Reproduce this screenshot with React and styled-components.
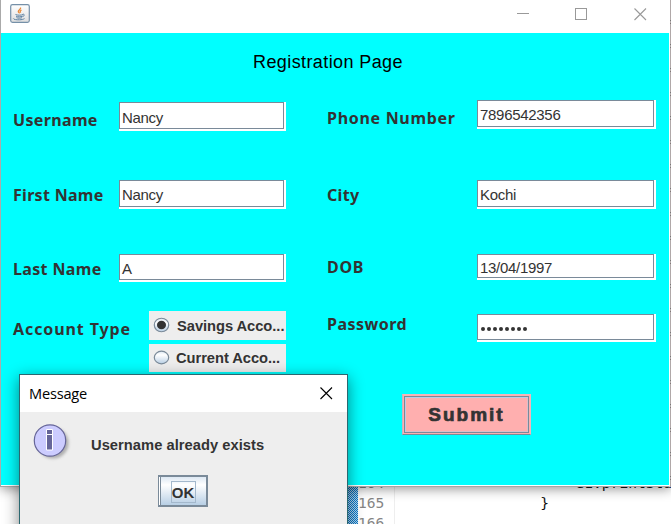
import React from "react";
import styled, { createGlobalStyle } from "styled-components";

const Global = createGlobalStyle`
  * { box-sizing: border-box; }
  html, body { margin: 0; padding: 0; overflow: hidden; background: #fff; }
`;

const Screen = styled.div`
  position: relative;
  display: flex;
  flex-direction: column;
  width: 671px;
  height: 524px;
  overflow: hidden;
  background: #fff;
  color: #333;
  font-family: "Liberation Sans", Arial, sans-serif;
`;

const Frame = styled.main`
  position: relative;
  z-index: 1;
  display: flex;
  flex: none;
  height: 487px;
  box-shadow: 0 2px 11px rgba(0, 0, 0, 0.42);
`;

const Window = styled.section`
  display: flex;
  flex-direction: column;
  width: 670px;
  border-left: 1px solid #aaa;
  border-right: 1px solid #fff;
  border-bottom: 1px solid #a5a5a5;
  background: #fff;
`;

const TitleBar = styled.header`
  display: flex;
  align-items: flex-start;
  justify-content: space-between;
  height: 33px;
  padding: 4px 22px 0 9px;
`;

const Controls = styled.div`
  display: flex;
  gap: 46px;
  padding-top: 3px;

  svg:last-child { margin-left: 1px; }
`;

const Form = styled.div`
  display: flex;
  flex-direction: column;
  height: 452px;
  background: #00ffff;
`;

const Heading = styled.h1`
  margin: 0;
  height: 67px;
  padding: 19px 14px 0 0;
  text-align: center;
  font-size: 18px;
  font-weight: 400;
  line-height: 21px;
  letter-spacing: 0.4px;
  color: #000;
`;

const Columns = styled.div`
  display: grid;
  grid-template-columns: 314px 1fr;
  padding-left: 12px;
`;

const Column = styled.div`
  display: grid;
  grid-template-rows: ${(p) => p.$rows};
`;

const FormRow = styled.div`
  display: grid;
  grid-template-columns: ${(p) => p.$label}px ${(p) => p.$field}px;
  align-items: start;
  padding-top: ${(p) => p.$top || 0}px;
`;

const Label = styled.label`
  margin-top: ${(p) => p.$top}px;
  font: 700 16px/22px "Noto Sans", "Open Sans", sans-serif;
  letter-spacing: ${(p) => p.$spacing}px;
  white-space: nowrap;
`;

const FieldBox = styled.div`
  display: flex;
  height: ${(p) => p.$height}px;
  padding: 0 2px 2px 0;
  background: #fff;
`;

const FieldInner = styled.div`
  flex: 1;
  display: flex;
  align-items: center;
  padding-left: 2px;
  padding-top: ${(p) => p.$nudge || 0}px;
  border: 1px solid #7a8a99;
  font-size: 15px;
  line-height: 17px;
  letter-spacing: -0.3px;
`;

const Dots = styled.div`
  display: flex;
  gap: 2px;
  padding: 3px 0 0 1px;
`;

const Dot = styled.i`
  width: 4px;
  height: 4px;
  border-radius: 50%;
  background: #333;
`;

const Options = styled.div`
  display: flex;
  flex-direction: column;
  gap: 4px;
`;

const Option = styled.div`
  display: flex;
  align-items: center;
  gap: ${(p) => p.$gap}px;
  height: ${(p) => p.$height}px;
  padding-left: 4px;
  background: #eee;
  font-size: 14.7px;
  font-weight: 700;
  letter-spacing: -0.04px;
  white-space: nowrap;

  svg { margin-bottom: 2px; }
`;

const Submit = styled.button`
  width: 129px;
  height: 41px;
  margin: 0 0 0 75px;
  padding: 1px;
  border: 1px solid #f5b5bb;
  border-bottom-color: #7a8a99;
  border-left-color: #c9b5c4;
  background: #ffafaf;
`;

const SubmitFace = styled.span`
  display: flex;
  align-items: center;
  justify-content: center;
  height: 100%;
  border: 1px solid #7a8a99;
  box-shadow: inset 1px 1px #b8cfe5, inset -1px -1px #d9bfcb;
  color: #333;
  font: 700 19px/22px "Liberation Sans", Arial, sans-serif;
  letter-spacing: 2px;
  -webkit-text-stroke: 0.7px #333;
`;

const Edge = styled.div`
  width: 1px;
  background: repeating-linear-gradient(#b0a8a8 0 20px, #777 20px 21px, #b0a8a8 21px 23px, #807878 23px 24px);
`;

const Editor = styled.div`
  display: grid;
  grid-template-columns: 348px 10px 37px 1fr;
  height: 37px;
  font: 14.6px/20px "DejaVu Sans Mono", monospace;
`;

const Ruler = styled.div`
  grid-column: 2;
  background: repeating-conic-gradient(#0878c8 0 25%, #b4d8f2 0 50%) 0 0 / 2px 2px;
`;

const Gutter = styled.div`
  overflow: hidden;
  border-right: 1px solid #eee;
  color: #858585;
`;

const Code = styled.div`
  overflow: hidden;
  color: #111;
`;

const Lines = styled.pre`
  margin: -14px 0 0 ${(p) => p.$shift || 0}px;
  font: inherit;
`;

const Dialog = styled.section`
  position: absolute;
  z-index: 2;
  left: 19px;
  top: 374px;
  width: 329px;
  height: 170px;
  border: 1px solid #2b6870;
  background: #eee;
  box-shadow: 0 4px 15px rgba(0, 0, 0, 0.48);
`;

const DialogBar = styled.header`
  display: flex;
  justify-content: space-between;
  align-items: center;
  height: 37px;
  padding: 0 14px 2px 9px;
  background: #fff;
  color: #000;
  font: 14.6px/20px "Open Sans", "Noto Sans", sans-serif;
  letter-spacing: -0.2px;
`;

const DialogBody = styled.div`
  display: flex;
  align-items: flex-start;
  height: 63px;
  padding: 9px 0 0 12px;
`;

const MessageText = styled.p`
  margin: 16px 0 0 17px;
  font-size: 14.7px;
  font-weight: 700;
  line-height: 17px;
  letter-spacing: 0.04px;
`;

const OkButton = styled.button`
  display: flex;
  align-items: center;
  justify-content: center;
  width: 50px;
  height: 32px;
  margin-left: 138px;
  padding: 1px 0 0 1px;
  border: 2px solid #7a8a99;
  border-left-width: 1px;
  background: linear-gradient(#dde8f3, #fff 28%, #b8cfe5);
  box-shadow: inset 1px 0 #fff, inset 2px 0 #7a8a99;
`;

const OkText = styled.span`
  display: flex;
  align-items: center;
  justify-content: center;
  width: 25px;
  height: 22px;
  padding-top: 2px;
  border: 1px solid #a3b8cc;
  color: #333;
  font: 700 15px/17px "Liberation Sans", Arial, sans-serif;
`;

const JavaIcon = () => (
  <svg width="20" height="19" viewBox="0 0 20 19">
    <defs>
      <linearGradient id="jv" x2="0" y2="1">
        <stop stopColor="#fff" />
        <stop offset="1" stopColor="#dedede" />
      </linearGradient>
    </defs>
    <rect x=".7" y=".7" width="18.6" height="17.6" rx="1.8" fill="url(#jv)" stroke="#7590a8" strokeWidth="1.2" />
    <path d="M10.500 3.500c1 1.700-2.500 2.500-2.200 4 .2 1 1.200 1 1 1.800M11.500 6c-1.300.8-1.800 1.400-.8 2.600" fill="none" stroke="#e88a3a" strokeWidth="1.300" />
    <path d="M5.500 10.500c1.500.9 6 .9 7.500 0M6 12.200c1.800.8 4.700.8 6.500 0M6.500 13.700c1.500.6 4 .6 5.500 0M12.800 10.300c2.200-.5 1.700 2-.3 2.300M3.500 14.300c-1 1.600 8 2.300 11 .3" fill="none" stroke="#5f83a3" />
  </svg>
);

const MinimizeIcon = () => (
  <svg width="12" height="13" shapeRendering="crispEdges"><path d="M0 6.500h12" stroke="#999" /></svg>
);
const MaximizeIcon = () => (
  <svg width="12" height="13" shapeRendering="crispEdges"><path d="M.5 1.500h11v11H.5z" fill="none" stroke="#999" /></svg>
);
const CloseIcon = ({ color }) => (
  <svg width="13" height="14"><path d="M.5 1.500l11.500 11.500M12 1.500L.5 13" stroke={color} strokeWidth="1.100" /></svg>
);

const Radio = ({ checked, height }) => (
  <svg width="17" height={height} viewBox="0 0 17 17" preserveAspectRatio="none">
    <defs>
      <linearGradient id="rd" x2="0" y2="1">
        <stop stopColor="#dce7f2" />
        <stop offset=".3" stopColor="#fff" />
        <stop offset="1" stopColor="#b8cfe5" />
      </linearGradient>
    </defs>
    <circle cx="8.500" cy="8.500" r="7.200" fill="url(#rd)" stroke="#7a8a99" strokeWidth="1.200" />
    {checked && <circle cx="8.500" cy="8.500" r="4.500" fill="#333" />}
  </svg>
);

const InfoIcon = () => (
  <svg width="42" height="42" viewBox="0 0 42 42">
    <defs>
      <filter id="soft" x="-30%" y="-30%" width="160%" height="160%">
        <feGaussianBlur stdDeviation="1.500" />
      </filter>
    </defs>
    <circle cx="21" cy="22" r="15.500" fill="#999" opacity=".75" filter="url(#soft)" />
    <circle cx="18" cy="19.500" r="15.700" fill="#ccccff" stroke="#666699" strokeWidth="1.200" />
    <path d="M14.500 8.500h6v5h-6zM14.500 13.500h6v15.500h-6z" fill="#666699" stroke="#fff" />
  </svg>
);

const Field = ({ label, value, left, top = 0, labelTop, spacing, height = 29, nudge }) => (
  <FormRow $label={left ? 106 : 150} $field={left ? 167 : 179} $top={top}>
    <Label $top={labelTop} $spacing={spacing}>{label}</Label>
    <FieldBox $height={height}>
      <FieldInner $nudge={nudge}>{value}</FieldInner>
    </FieldBox>
  </FormRow>
);

const PasswordDots = () => (
  <Dots>{Array.from({ length: 8 }, (_, i) => <Dot key={i} />)}</Dots>
);

export default function App() {
  return (
    <Screen>
      <Global />
      <Frame>
        <Window>
          <TitleBar>
            <JavaIcon />
            <Controls>
              <MinimizeIcon />
              <MaximizeIcon />
              <CloseIcon color="#999" />
            </Controls>
          </TitleBar>
          <Form>
            <Heading>Registration Page</Heading>
            <Columns>
              <Column $rows="80px 74px 57px 61px">
                <Field left label="Username" value="Nancy" top={2} labelTop={7} spacing={0.35} nudge={4} />
                <Field left label="First Name" value="Nancy" labelTop={4} spacing={0.3} nudge={2} />
                <Field left label="Last Name" value="A" labelTop={4} spacing={0.35} height={28} nudge={2} />
                <FormRow $label={136} $field={137}>
                  <Label $top={7} $spacing={0.9}>Account Type</Label>
                  <Options>
                    <Option $height={29} $gap={7}><Radio checked height={16} />Savings Acco...</Option>
                    <Option $height={28} $gap={6}><Radio height={15} />Current Acco...</Option>
                  </Options>
                </FormRow>
              </Column>
              <Column $rows="80px 74px 60px 80px 41px">
                <Field label="Phone Number" value="7896542356" labelTop={7} spacing={0.7} nudge={2} />
                <Field label="City" value="Kochi" labelTop={4} spacing={0.3} nudge={2} />
                <Field label="DOB" value="13/04/1997" labelTop={2} spacing={0.7} height={26} nudge={2} />
                <Field label="Password" value={<PasswordDots />} labelTop={-1} spacing={0.5} height={28} />
                <Submit><SubmitFace>Submit</SubmitFace></Submit>
              </Column>
            </Columns>
          </Form>
        </Window>
        <Edge />
      </Frame>
      <Editor>
        <Ruler />
        <Gutter><Lines>{"164\n165\n166"}</Lines></Gutter>
        <Code><Lines $shift={-4}>{"                     e1.printStackTrace\n                 }"}</Lines></Code>
      </Editor>
      <Dialog>
        <DialogBar>Message<CloseIcon color="#000" /></DialogBar>
        <DialogBody>
          <InfoIcon />
          <MessageText>Username already exists</MessageText>
        </DialogBody>
        <OkButton><OkText>OK</OkText></OkButton>
      </Dialog>
    </Screen>
  );
}
